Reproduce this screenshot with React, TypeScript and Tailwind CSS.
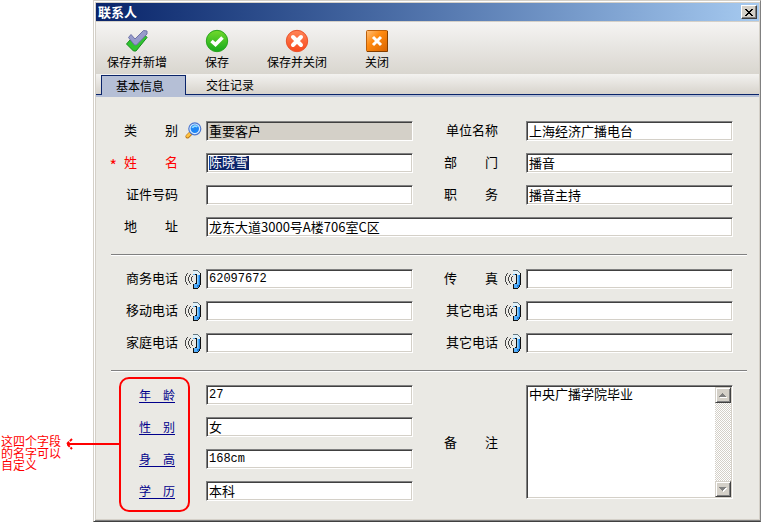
import type { ReactNode } from "react";

const sunken =
  "border border-t-[#808080] border-l-[#808080] border-r-white border-b-white shadow-[inset_1px_1px_0_#404040,inset_-1px_-1px_0_#d4d0c8]";

function SearchIcon() {
  return (
    <svg width="17" height="18" viewBox="0 0 17 18">
      <path d="M5.5 11.5 L2.5 14.5" stroke="#b8741a" strokeWidth="4" strokeLinecap="round" />
      <path d="M5.5 11.2 L2.4 14.2" stroke="#ffc23e" strokeWidth="2.6" strokeLinecap="round" />
      <circle cx="9.8" cy="6.8" r="6" fill="#d9ecff" stroke="#4c78d0" strokeWidth="1.2" />
      <circle cx="9.8" cy="6.8" r="4.2" fill="#1f86f4" />
      <path d="M7.4 6 a3 2.6 0 0 1 5 -1.2" stroke="#8fdcff" strokeWidth="1.8" fill="none" />
    </svg>
  );
}

function PhoneIcon() {
  return (
    <svg width="17" height="19" viewBox="0 0 17 19" shapeRendering="crispEdges">
      <path
        d="M2 3h1v1H2zM1 4h1v2H1zM0 6h1v6H0zM1 12h1v2H1zM2 14h1v1H2zM5 4h1v1H5zM4 5h1v2H4zM3 7h1v4H3zM4 11h1v2H4zM5 13h1v1H5zM7 6h1v1H7zM6 7h1v4H6zM7 11h1v1H7z"
        fill="#444"
      />
      <path d="M8 1h5v1h1v1h1v12h-1v2h-1v1H8v-4h4V5H8z" fill="#55b0fb" />
      <path d="M8 1h5v1h1v1h1v2h-3V4H8z" fill="#dff0f8" />
      <path d="M12 5h1v9h-1z" fill="#8fd0ff" />
      <path d="M14 5h1v10h-1v2h-2v-2h2z" fill="#1c7fe0" />
      <path d="M8 0h5v1h1v1h1v1h-1V2h-1V1H8z" fill="#667880" />
      <path d="M10 4h2v10h-2v-1h1V5h-1z" fill="#111" />
      <path d="M15 3h1v12h-1v2h-1v1h-1v1H8v-1h5v-1h1v-2h1z" fill="#111" />
      <path d="M8 14h1v4H8z" fill="#111" />
    </svg>
  );
}

function DoubleCheckIcon() {
  return (
    <svg width="24" height="24" viewBox="0 0 24 24">
      <path
        d="M1.5 15 L5 11 L9 15 L19 5 L22 8.5 L11 22 L8.5 22 Z"
        fill="#2fc52f"
        stroke="#168b1b"
        strokeLinejoin="round"
      />
      <path
        d="M3.5 8.5 L6 5.5 L10 10 L18.5 1.5 L22 2 L22 5 L11.5 16 L9.5 16 Z"
        fill="#979bcb"
        stroke="#6d72a8"
        strokeLinejoin="round"
      />
    </svg>
  );
}

function SaveIcon() {
  return (
    <svg width="24" height="24" viewBox="0 0 24 24">
      <defs>
        <linearGradient id="green" x1="0" y1="0" x2="0" y2="1">
          <stop offset="0" stopColor="#72d92c" />
          <stop offset="1" stopColor="#16a91c" />
        </linearGradient>
      </defs>
      <circle cx="12" cy="12" r="10.7" fill="url(#green)" stroke="#29a51d" />
      <path d="M6.5 12 L10.5 15.5 L17.5 8.5" fill="none" stroke="#fff" strokeWidth="3.6" />
    </svg>
  );
}

function SaveCloseIcon() {
  return (
    <svg width="24" height="24" viewBox="0 0 24 24">
      <defs>
        <linearGradient id="red" x1="0" y1="0" x2="0" y2="1">
          <stop offset="0" stopColor="#ff8558" />
          <stop offset="1" stopColor="#f8481c" />
        </linearGradient>
      </defs>
      <circle cx="12" cy="12" r="10.7" fill="url(#red)" stroke="#e9532c" />
      <path
        d="M8 8 L16 16 M16 8 L8 16"
        stroke="#fff"
        strokeWidth="4"
        strokeLinecap="round"
      />
    </svg>
  );
}

function CloseIcon() {
  return (
    <svg width="24" height="24" viewBox="0 0 24 24">
      <defs>
        <linearGradient id="orange" x1="0" y1="0" x2="1" y2="1">
          <stop offset="0" stopColor="#ffc07a" />
          <stop offset=".4" stopColor="#ff8a10" />
          <stop offset="1" stopColor="#d96400" />
        </linearGradient>
      </defs>
      <rect x="1.5" y="1.5" width="21" height="21" rx="1" fill="url(#orange)" stroke="#bd5f0a" />
      <path d="M2 22.5h20.5V2" stroke="#843f00" fill="none" />
      <path d="M8 8 L16 16 M16 8 L8 16" stroke="#fff" strokeWidth="3" />
    </svg>
  );
}

function ToolButton({ icon, text }: { icon: ReactNode; text: string }) {
  return (
    <button type="button" className="flex w-20 flex-col items-center gap-px text-xs leading-4">
      {icon}
      <span>{text}</span>
    </button>
  );
}

type FieldProps = {
  id: string;
  label: string;
  value?: string;
  icon?: ReactNode;
  required?: boolean;
  readOnly?: boolean;
  selected?: boolean;
  wide?: boolean;
  latin?: boolean;
};

function FieldLabel({ id, label, icon, required }: FieldProps) {
  return (
    <div className="flex h-5 items-center justify-end">
      {required && <span className="mr-[7px] pt-1 text-base text-[#ff0000]">*</span>}
      <label
        htmlFor={id}
        className={`flex w-[54px] shrink-0 pb-[2px] leading-[18px] ${
          label.length === 2 ? "justify-between" : "justify-end"
        } ${required ? "text-[#ff0000]" : ""}`}
      >
        {label.length === 2 ? label.split("").map((c) => <span key={c}>{c}</span>) : label}
      </label>
      <span className="flex w-7 shrink-0 pl-[7px]">{icon}</span>
    </div>
  );
}

function TextBox({ id, value = "", readOnly, selected, wide, latin }: FieldProps) {
  if (selected) {
    return (
      <div className={`relative h-5 min-w-0 bg-white ${sunken}`}>
        <span className="absolute top-[2px] left-[2px] h-[14px] w-10 bg-[#0a246a]" />
        <input
          id={id}
          defaultValue={value}
          className="relative block h-[18px] w-full bg-transparent px-[2px] pb-[2px] text-white outline-none"
        />
      </div>
    );
  }
  return (
    <input
      id={id}
      defaultValue={value}
      readOnly={readOnly}
      className={`h-5 w-full min-w-0 rounded-none px-[2px] outline-none ${sunken} ${
        readOnly ? "bg-[#d4d0c8]" : "bg-white"
      } ${wide ? "col-span-3" : ""} ${
        latin ? "font-['Liberation_Mono','Noto_Sans_CJK_SC',monospace] text-xs" : "pb-[2px]"
      }`}
    />
  );
}

function Field(props: FieldProps) {
  return (
    <>
      <FieldLabel {...props} />
      <TextBox {...props} />
    </>
  );
}

function CustomField({ id, label, value, latin }: FieldProps) {
  return (
    <>
      <div className="flex h-5 items-center justify-end pr-[31px] text-xs">
        <a href="#" id={`${id}-name`} className="text-[#00008b] underline underline-offset-2">
          {label}
        </a>
      </div>
      <input
        aria-labelledby={`${id}-name`}
        defaultValue={value}
        className={`h-5 w-full min-w-0 bg-white px-[2px] outline-none ${sunken} ${
          latin ? "font-['Liberation_Mono','Noto_Sans_CJK_SC',monospace] text-xs" : "pb-[2px]"
        }`}
      />
    </>
  );
}

function ScrollButton({ name, d }: { name: string; d: string }) {
  return (
    <button
      type="button"
      aria-label={name}
      className="flex h-4 w-4 items-center justify-center border border-t-[#d4d0c8] border-l-[#d4d0c8] border-r-[#404040] border-b-[#404040] bg-[#d4d0c8] shadow-[inset_1px_1px_0_#fff,inset_-1px_-1px_0_#808080]"
    >
      <svg width="8" height="5" viewBox="0 0 8 5" shapeRendering="crispEdges">
        <path d={d} fill="#fff" transform="translate(1 1)" />
        <path d={d} fill="#808080" />
      </svg>
    </button>
  );
}

function Divider() {
  return <hr className="mt-[17px] mb-[13px] h-[2px] border-0 border-t border-[#808080] bg-white" />;
}

const grid = "grid grid-cols-[95px_1fr_113px_1fr] gap-y-3 pr-[14px]";

export default function App() {
  return (
    <div className="flex w-full bg-white font-['Noto_Sans_CJK_SC',sans-serif] text-[13px] text-black">
      <aside className="w-[93px] shrink-0 self-end pb-[51px] pl-px text-xs leading-3 text-[#ff0000]">
        <p className="w-16">这四个字段的名字可以自定义</p>
      </aside>

      <main className="min-w-0 flex-1 border border-t-[#d4d0c8] border-l-[#d4d0c8] border-r-[#808080] border-b-[#404040] bg-[#d4d0c8] pt-[2px] pr-px pb-[2px] pl-[2px] shadow-[inset_1px_1px_0_#fff,inset_0_-1px_0_#808080]">
        <header className="mb-px flex h-[18px] items-center justify-between bg-linear-to-r from-[#0a246a] to-[#a6caf0] pr-[2px] pl-[2px]">
          <h1 className="text-[13px] leading-4 font-bold text-white">联系人</h1>
          <button
            type="button"
            aria-label="关闭窗口"
            className="flex h-[14px] w-4 items-center justify-center border border-t-white border-l-white border-r-[#404040] border-b-[#404040] bg-[#d4d0c8] shadow-[inset_-1px_-1px_0_#808080]"
          >
            <svg width="8" height="7" viewBox="0 0 8 7" shapeRendering="crispEdges">
              <path
                d="M0 0h2v1h1v1h2v-1h1v-1h2v1h-1v1h-1v1h-1v1h1v1h1v1h1v1h-2v-1h-1v-1h-2v1h-1v1h-2v-1h1v-1h1v-1h1v-1h-1v-1h-1v-1h-1z"
                fill="#000"
              />
            </svg>
          </button>
        </header>

        <nav className="flex h-[52px] bg-linear-to-b from-[#f5f4f3] to-[#d9d6cf] pt-[7px] pl-px">
          <ToolButton icon={<DoubleCheckIcon />} text="保存并新增" />
          <ToolButton icon={<SaveIcon />} text="保存" />
          <ToolButton icon={<SaveCloseIcon />} text="保存并关闭" />
          <ToolButton icon={<CloseIcon />} text="关闭" />
        </nav>

        <div
          role="tablist"
          className="flex h-[23px] border-b-2 border-[#b5bfd6] bg-linear-to-b from-[#f3f2f0] to-[#d6d2ca] pl-[5px] text-xs leading-5 shadow-[inset_0_-1px_0_#0a246a]"
        >
          <button
            type="button"
            role="tab"
            aria-selected="true"
            className="mt-px w-[85px] border border-b-0 border-[#0a246a] bg-[#b5bfd6] pl-[14px] text-left leading-[18px]"
          >
            基本信息
          </button>
          <button type="button" role="tab" aria-selected="false" className="mt-px mb-px px-5">
            交往记录
          </button>
        </div>

        <form className="bg-[#eae9e4] pt-6 pr-3 pb-[18px] pl-[15px]">
          <div className={grid}>
            <Field id="kind" label="类别" value="重要客户" icon={<SearchIcon />} readOnly />
            <Field id="company" label="单位名称" value="上海经济广播电台" />
            <Field id="name" label="姓名" value="陈晓雪" required selected />
            <Field id="dept" label="部门" value="播音" />
            <Field id="cert" label="证件号码" />
            <Field id="job" label="职务" value="播音主持" />
            <Field id="address" label="地址" value="龙东大道3000号A楼706室C区" wide />
          </div>

          <Divider />

          <div className={grid}>
            <Field id="office" label="商务电话" value="62097672" icon={<PhoneIcon />} latin />
            <Field id="fax" label="传真" icon={<PhoneIcon />} />
            <Field id="mobile" label="移动电话" icon={<PhoneIcon />} />
            <Field id="other1" label="其它电话" icon={<PhoneIcon />} />
            <Field id="home" label="家庭电话" icon={<PhoneIcon />} />
            <Field id="other2" label="其它电话" icon={<PhoneIcon />} />
          </div>

          <Divider />

          <div className={`relative ${grid}`}>
            <CustomField id="age" label="年　龄" value="27" latin />
            <div className="row-span-4 flex flex-col justify-center">
              <FieldLabel id="memo" label="备注" />
            </div>
            <div className={`row-span-4 flex h-[114px] min-w-0 bg-white p-px ${sunken}`}>
              <textarea
                id="memo"
                defaultValue="中央广播学院毕业"
                className="min-w-0 flex-1 resize-none overflow-hidden px-px leading-[14px] outline-none"
              />
              <div className="flex w-4 flex-col justify-between bg-[repeating-conic-gradient(#fff_0_25%,#d4d0c8_0_50%)] bg-[length:2px_2px]">
                <ScrollButton name="向上滚动" d="M3 0h1v1h1v1h1v1h1v1H0V3h1V2h1V1h1z" />
                <ScrollButton name="向下滚动" d="M0 0h7v1H6v1H5v1H4v1H3V3H2V2H1V1H0z" />
              </div>
            </div>
            <CustomField id="sex" label="性　别" value="女" />
            <CustomField id="tall" label="身　高" value="168cm" latin />
            <CustomField id="degree" label="学　历" value="本科" />

            {/* callout around the renameable fields */}
            <div className="pointer-events-none absolute -top-2 left-2 h-[135px] w-[71px] rounded-[10px] border-2 border-[#ff0000]">
              <svg
                width="55"
                height="12"
                viewBox="0 0 55 12"
                className="absolute top-[59px] right-full"
                fill="none"
                stroke="#ff0000"
                strokeWidth="2"
              >
                <path d="M1 6H55" />
                <path d="M6 1L1 6L6 11" strokeDasharray="3 1" />
              </svg>
            </div>
          </div>
        </form>
      </main>
    </div>
  );
}
